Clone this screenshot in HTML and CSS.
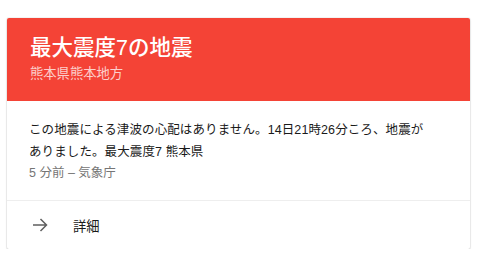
FILE: index.html
```html
<!DOCTYPE html>
<html lang="ja">
<head>
    <meta charset="UTF-8">
    <title>最大震度7の地震</title>
    <link rel="stylesheet" href="styles.css">
</head>
<body>
    <div class="card">
        <div class="card-header">
            <div class="title">最大震度7の地震</div>
            <div class="subtitle">熊本県熊本地方</div>
        </div>
        <div class="card-body">
            <p class="summary">この地震による津波の心配はありません。14日21時26分ころ、地震が<br>ありました。最大震度7 熊本県</p>
            <div class="meta">5 分前 – 気象庁</div>
        </div>
        <div class="card-footer">
            <svg class="arrow" width="16" height="14" viewBox="0 0 16 14">
                <path d="M1 7H14.5M8.5 1L14.5 7L8.5 13" fill="none" stroke="#5f5f5f" stroke-width="1.5"/>
            </svg>
            <span class="more">詳細</span>
        </div>
    </div>
</body>
</html>
```

FILE: styles.css
```css
body {
    margin: 0;
    padding: 18px 10px 0 7px;
    background: #fff;
    font-family: "Liberation Sans", "Noto Sans CJK JP", sans-serif;
    color: #1a1a1a;
}
.card {
    width: 463px;
    background: #fff;
    border-radius: 2px;
    box-shadow: 0 1px 2px rgba(0, 0, 0, 0.18), 0 0 0 1px rgba(0, 0, 0, 0.04);
    overflow: hidden;
}
.card-header {
    background: #f44336;
    color: #fff;
    padding: 16px 23px 17px;
}
.title {
    font-size: 21.5px;
    line-height: 28px;
    font-weight: 500;
}
.subtitle {
    font-size: 13.3px;
    line-height: 20px;
    margin-top: 2px;
    color: rgba(255, 255, 255, 0.75);
}
.card-body {
    padding: 18px 23px 17px 22px;
    border-bottom: 1px solid #eee;
}
.summary {
    margin: 0;
    font-size: 12.5px;
    line-height: 22px;
    letter-spacing: 0.1px;
}
.meta {
    font-size: 12.5px;
    line-height: 20px;
    color: #757575;
}
.card-footer {
    height: 48px;
    display: flex;
    align-items: center;
    padding-left: 25px;
}
.arrow {
    margin-right: 25px;
}
.more {
    font-size: 13.3px;
}
```
